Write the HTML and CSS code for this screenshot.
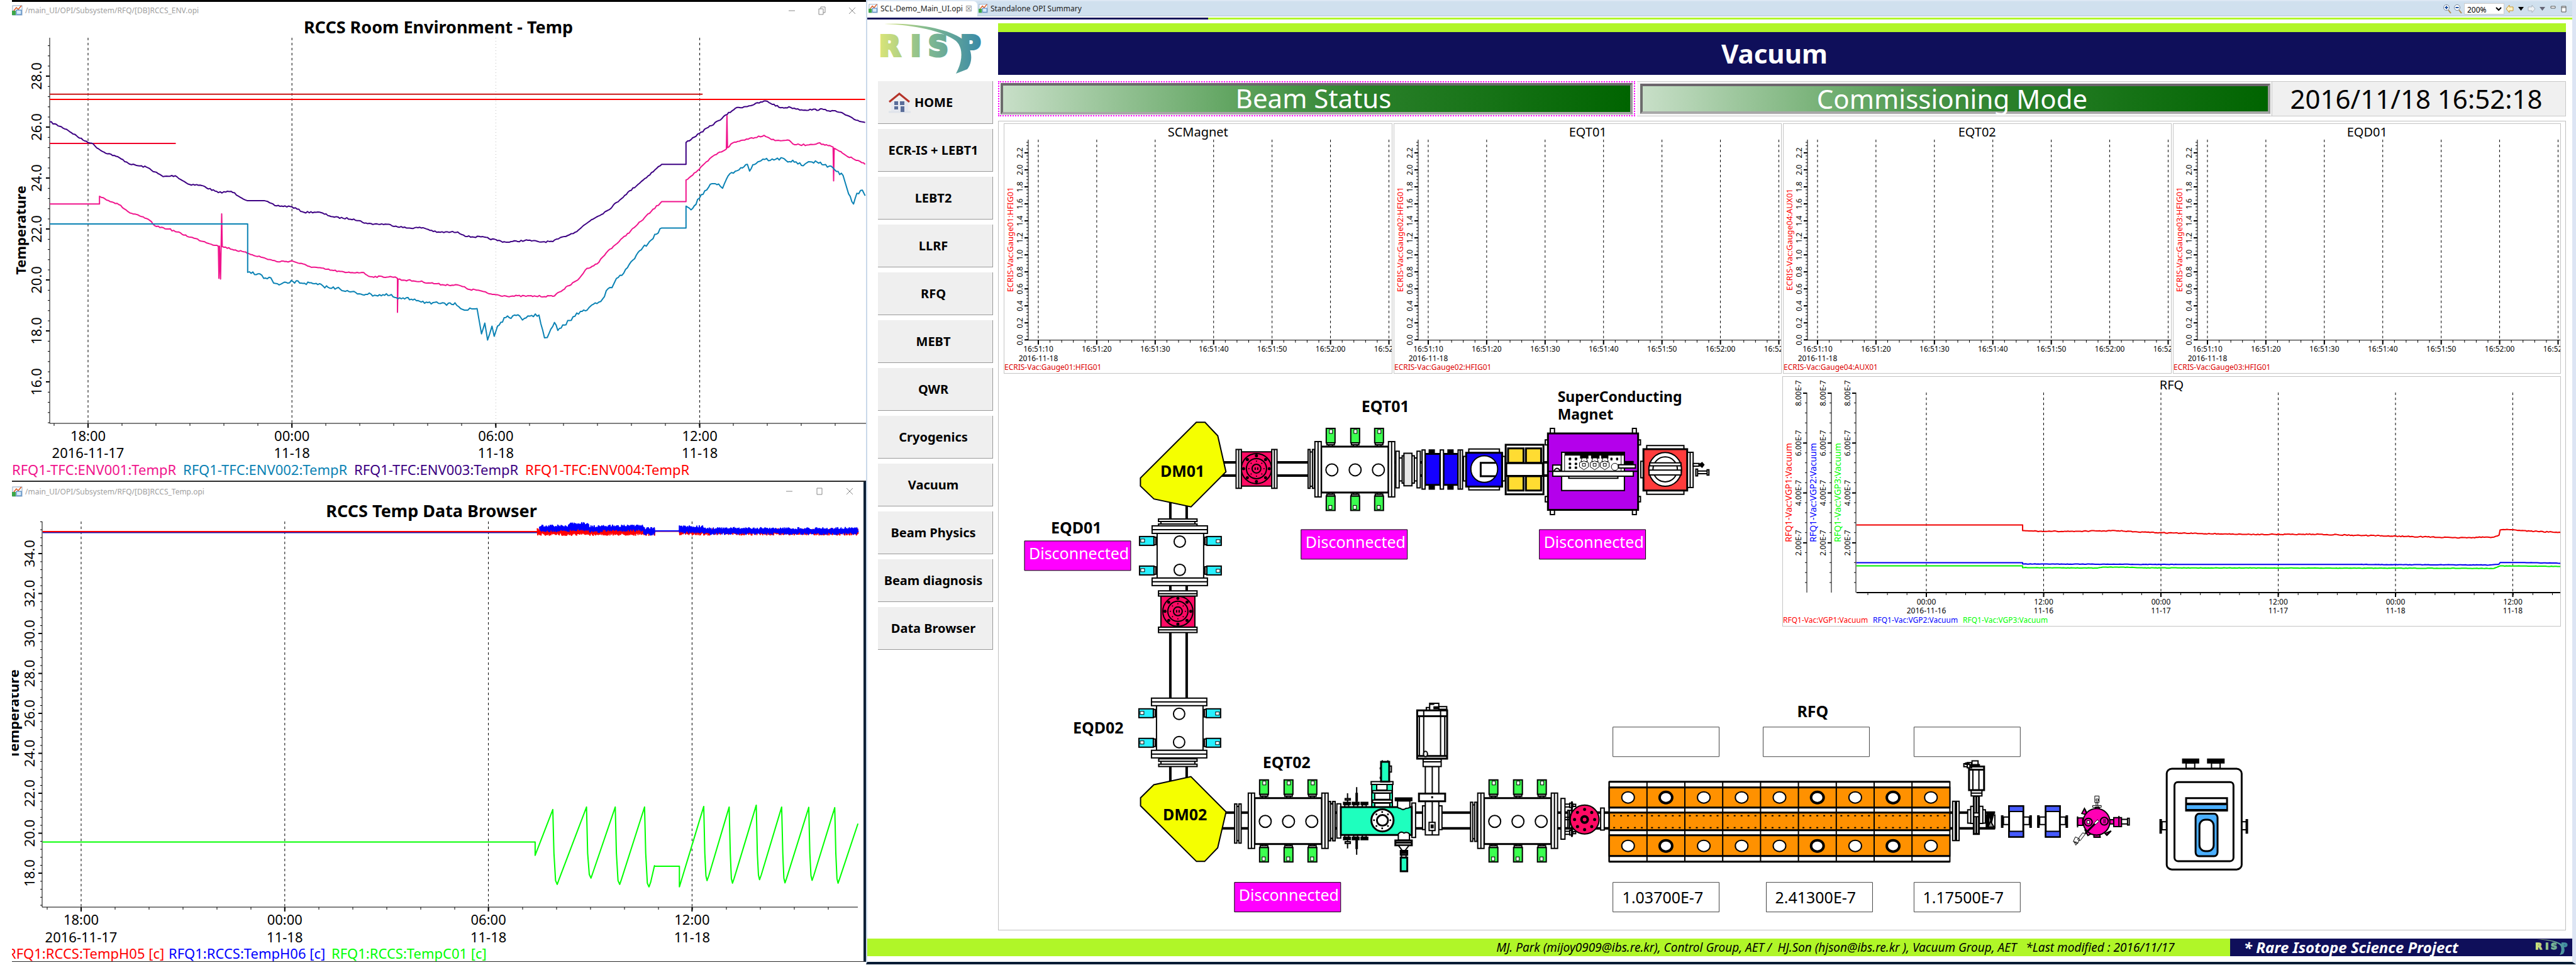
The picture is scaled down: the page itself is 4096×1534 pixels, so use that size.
FILE: index.html
```html
<!DOCTYPE html>
<html lang="en">
<head>
<meta charset="utf-8">
<title>SCL-Demo Main UI - Vacuum</title>
<link rel="stylesheet" href="styles.css">
</head>
<body>
<svg class="defs" width="0" height="0" aria-hidden="true">
  <defs>
    <linearGradient id="logo-fill" gradientUnits="userSpaceOnUse" x1="0" y1="0" x2="172" y2="0">
      <stop offset="0" stop-color="#dce678"/><stop offset=".45" stop-color="#84bb90"/><stop offset="1" stop-color="#3285a8"/>
    </linearGradient>
    <g id="opi">
      <rect x="1" y="1" width="15" height="15" fill="#fff" stroke="#8ba6c4" stroke-width="1"/>
      <path d="M3 9l4-5 3 3 5-6" fill="none" stroke="#d9541e" stroke-width="1.5"/>
      <rect x="0" y="9" width="6" height="7" fill="#3da648" stroke="none"/>
      <rect x="7" y="8" width="8" height="7" fill="#d8ebfb" stroke="#2d6fb3" stroke-width="1"/>
    </g>
    <g id="logo">
      <text class="logo-text" x="2" y="52">R</text>
      <text class="logo-text" x="52" y="52">I</text>
      <text class="logo-text" x="80" y="52">S</text>
      <text class="logo-text" x="131" y="52">P</text>
      <path stroke="none" d="M10 1C55 -1 112 8 134 25C152 40 151 62 142 73L124 80C134 62 137 40 124 28C102 12 60 3 10 1z" fill="url(#logo-fill)"/>
    </g>
    <!-- turbo pump port, tip at the top -->
    <g id="port">
      <rect class="tint" x="-7" y="0" width="14" height="23"/>
      <rect x="-2" y="2" width="5" height="6" stroke-width="1"/>
      <rect x="-6" y="23" width="12" height="3"/>
      <rect x="-3" y="26" width="6" height="3"/>
    </g>
    <g id="eqt">
      <use href="#port" x="26" y="-21"/><use href="#port" x="65" y="-21"/><use href="#port" x="103" y="-21"/>
      <use href="#port" transform="translate(26 109.500) rotate(180)"/><use href="#port" transform="translate(65 109.500) rotate(180)"/><use href="#port" transform="translate(103 109.500) rotate(180)"/>
      <rect x="11" y="8" width="107" height="73" stroke-width="3"/>
      <rect x="1" y="0" width="10" height="88"/><path d="M6 0V88"/>
      <rect x="118" y="0" width="10" height="88"/><path d="M123 0V88"/>
      <circle cx="28" cy="45" r="9.500"/><circle cx="65" cy="45" r="9.500"/><circle cx="102" cy="45" r="9.500"/>
    </g>
    <g id="eqd">
      <use href="#port" transform="translate(-20 24) rotate(-90)"/><use href="#port" transform="translate(-20 71) rotate(-90)"/>
      <use href="#port" transform="translate(110 24) rotate(90)"/><use href="#port" transform="translate(110 71) rotate(90)"/>
      <rect x="8" y="11" width="74" height="72"/>
      <rect x="0" y="0" width="88" height="12"/><path d="M0 6H88"/>
      <rect x="0" y="83" width="88" height="12"/><path d="M0 89H88"/>
      <circle cx="44" cy="25" r="9"/><circle cx="44" cy="70" r="9"/>
    </g>
    <g id="face">
      <circle class="tint" r="24"/><circle class="tint" r="16"/><circle class="tint" r="7"/>
      <circle class="dots" r="20.500" pathLength="8" stroke-dasharray="0 1" stroke-width="5"/>
      <circle class="dots" r="12" pathLength="8" stroke-dasharray="0 1" stroke-width="2"/>
      <path d="M-2 -2v4M2 -2v4"/>
    </g>
  </defs>
</svg>

<main class="desktop">
  <div class="recorders">
    <section class="recorder">
      <header class="titlebar">
        <svg class="icon" viewBox="0 0 17 17"><use href="#opi"/></svg>
        <span class="path">/main_UI/OPI/Subsystem/RFQ/[DB]RCCS_ENV.opi</span>
        <button class="winbtn" aria-label="Minimize"><svg viewBox="0 0 14 14"><path d="M2 7h10"/></svg></button>
        <button class="winbtn" aria-label="Restore"><svg viewBox="0 0 14 14"><path d="M2 4h7v9H2zM5 4V1h7v9H9"/></svg></button>
        <button class="winbtn" aria-label="Close"><svg viewBox="0 0 14 14"><path d="M2 2l10 10M12 2L2 12"/></svg></button>
      </header>
      <svg class="chart recorder-chart" id="chart-env" viewBox="19 30 1358 734"></svg>
    </section>
    <section class="recorder recorder-front">
      <header class="titlebar">
        <svg class="icon" viewBox="0 0 17 17"><use href="#opi"/></svg>
        <span class="path">/main_UI/OPI/Subsystem/RFQ/[DB]RCCS_Temp.opi</span>
        <button class="winbtn" aria-label="Minimize"><svg viewBox="0 0 14 14"><path d="M2 7h10"/></svg></button>
        <button class="winbtn" aria-label="Maximize"><svg viewBox="0 0 14 14"><path d="M3 2h8v10H3z"/></svg></button>
        <button class="winbtn" aria-label="Close"><svg viewBox="0 0 14 14"><path d="M2 2l10 10M12 2L2 12"/></svg></button>
      </header>
      <svg class="chart recorder-chart" id="chart-temp" viewBox="19 796 1354 732"></svg>
    </section>
  </div>

  <div class="workbench">
    <nav class="tabs">
      <a class="tab tab-active" href="#main"><svg class="icon" viewBox="0 0 17 17"><use href="#opi"/></svg>SCL-Demo_Main_UI.opi <span class="tab-close">☒</span></a>
      <a class="tab" href="#summary"><svg class="icon" viewBox="0 0 17 17"><use href="#opi"/></svg>Standalone OPI Summary</a>
      <div class="tools">
        <button class="tool" aria-label="Zoom in"><svg viewBox="0 0 14 16"><circle cx="6" cy="6" r="4.500" fill="#fff" stroke="#789"/><path d="M3.500 6h5M6 3.500v5" stroke="#1c4fa0" stroke-width="2"/><path d="M9 10l4 5" stroke="#b08a50" stroke-width="2"/></svg></button>
        <button class="tool" aria-label="Zoom out"><svg viewBox="0 0 14 16"><circle cx="6" cy="6" r="4.500" fill="#fff" stroke="#789"/><path d="M3.500 6h5" stroke="#1c4fa0" stroke-width="2"/><path d="M9 10l4 5" stroke="#b08a50" stroke-width="2"/></svg></button>
        <select class="zoom" aria-label="Zoom level"><option>200%</option></select>
        <button class="tool" aria-label="Back"><svg viewBox="0 0 14 16"><path d="M1 8l5-6v3h6v6H6v3z" fill="#fff3c4" stroke="#c9962a"/></svg></button>
        <button class="tool" aria-label="Back history"><svg viewBox="0 0 14 16"><path d="M3 5h9l-4.500 6z" fill="#000"/></svg></button>
        <button class="tool" aria-label="Forward"><svg viewBox="0 0 14 16"><path d="M13 8L8 2v3H2v6h6v3z" fill="#eef1f4" stroke="#a9b3bd"/></svg></button>
        <button class="tool" aria-label="Forward history"><svg viewBox="0 0 14 16"><path d="M3 5h9l-4.500 6z" fill="#667"/></svg></button>
        <button class="tool" aria-label="Minimize"><svg viewBox="0 0 14 16"><path d="M4 4h7v3H4z" fill="#fff" stroke="#555"/></svg></button>
        <button class="tool" aria-label="Maximize"><svg viewBox="0 0 14 16"><path d="M4 4h7v9H4zM4 6h7" fill="#fff" stroke="#555"/></svg></button>
      </div>
    </nav>
    <div class="rule"></div>

    <div class="page" id="main">
      <aside class="side">
        <svg class="logo" viewBox="0 0 172 82" role="img" aria-label="RISP"><use href="#logo"/></svg>
        <button class="nav nav-home"><svg class="home" viewBox="0 0 36 34"><path d="M5 15h27v17H5z" fill="#e6e9f0"/><path d="M1 32h35" stroke="#dfe3ea" stroke-width="3"/><path d="M2 16L18 3l16 13" fill="none" stroke="#b5342a" stroke-width="3"/><path d="M10 15h6v6h-6zM19 15h7v6h-7zM10 23h6v5h-6zM20 23h6v9h-6z" fill="#5a6d99"/></svg>HOME</button>
        <button class="nav">ECR-IS + LEBT1</button>
        <button class="nav">LEBT2</button>
        <button class="nav">LLRF</button>
        <button class="nav">RFQ</button>
        <button class="nav">MEBT</button>
        <button class="nav">QWR</button>
        <button class="nav">Cryogenics</button>
        <button class="nav">Vacuum</button>
        <button class="nav">Beam Physics</button>
        <button class="nav">Beam diagnosis</button>
        <button class="nav">Data Browser</button>
      </aside>

      <div class="content">
        <h1 class="banner">Vacuum</h1>
        <div class="status">
          <div class="lamp-box lamp-picked"><div class="lamp">Beam Status</div></div>
          <div class="lamp-box"><div class="lamp">Commissioning Mode</div></div>
          <time class="clock" datetime="2016-11-18T16:52:18">2016/11/18 16:52:18</time>
        </div>
        <section class="panel">
          <div class="gauges">
            <svg class="chart gauge" viewBox="0 0 618 398" data-title="SCMagnet" data-pv="ECRIS-Vac:Gauge01:HFIG01"></svg>
            <svg class="chart gauge" viewBox="0 0 618 398" data-title="EQT01" data-pv="ECRIS-Vac:Gauge02:HFIG01"></svg>
            <svg class="chart gauge" viewBox="0 0 618 398" data-title="EQT02" data-pv="ECRIS-Vac:Gauge04:AUX01"></svg>
            <svg class="chart gauge" viewBox="0 0 618 398" data-title="EQD01" data-pv="ECRIS-Vac:Gauge03:HFIG01"></svg>
          </div>
          <div class="synoptic">
            <svg class="beamline" viewBox="1596 598 2477 881">
              <!-- beam pipes -->
              <path class="pipe" d="M1861 780V1250M1887 780V1250M1930 735H2470M1930 756H2470M1930 1292H3173M1930 1317H3173"/>

              <!-- DM01, EQD01 column -->
              <g transform="translate(1611.500 600.800) scale(.3832 .3065)">
                <path fill="#f5ff00" d="M759 230H795L848 300L882 487L737 669L583 628L527 561V519z"/>
                <path d="M924 371h22v202h-22zM935 371v202M1072 371h22v202h-22zM1083 371v202"/>
                <path fill="#ff0a64" d="M946 383h126v178H946zM612 1132h141v161H612z"/>
                <path d="M602 1105h160v27H602zM602 1119h160M602 1293h160v28H602zM602 1307h160"/>
                <path d="M602 732h160v13H602zM612 745h141v13H612zM602 758h160v10H602z"/>
                <path d="M1223 371h8v202h-8zM1241 371h8v202h-8zM1231 384h10v178h-10z"/>
              </g>
              <use href="#face" class="c-rose" x="1998" y="745"/>
              <use href="#face" class="c-rose" x="1873" y="972"/>
              <use href="#eqd" class="c-cyan" x="1832" y="836"/>
              <use href="#eqd" class="c-cyan" x="1831" y="1110"/>
              <use href="#eqt" class="c-green" x="2090" y="702"/>

              <!-- EQT01 to the superconducting magnet -->
              <g transform="translate(2014.400 600.800) scale(.4733 .2356)">
                <path d="M434 494h11v248h-11zM505 494h11v248h-11zM445 540h10v155h-10zM455 525h10v185h-10zM488 525h8v185h-8zM496 540h9v155h-9z"/>
                <path fill="#e6e6e6" d="M461 508h27v220h-27z"/>
                <path fill="#000" d="M546 486h17v264h-17zM609 486h17v264h-17z"/>
                <path fill="#1400ff" stroke-width="3" d="M532 512h51v210h-51zM594 512h49v210h-49z"/>
                <path d="M522 486h10v264h-10zM583 486h11v264h-11zM643 486h15v264h-15zM650 486v264"/>
                <path d="M679 480h103v25H679zM679 733h103v23H679zM661 530h9v165h-9zM791 530h10v165h-10z"/>
                <path fill="#1400ff" stroke-width="3" d="M670 505h121v228H670z"/>
                <ellipse cx="731" cy="615" rx="45" ry="90"/>
                <path fill="none" stroke-width="3" d="M770 573H719V663H770"/>
                <path stroke-width="3" d="M803 451h127v334H803z"/>
                <path fill="#ffdc32" stroke-width="3" d="M811 475h52v98h-52zM871 475h51v98h-51zM811 663h52v97h-52zM871 663h51v97h-51z"/>
                <path stroke-width="3" d="M805 575h123v86H805z"/>
                <path d="M953 341h14v33h-14zM1229 341h13v33h-13zM953 890h14v32h-14zM1229 890h13v32h-13zM936 418h9v34h-9zM936 800h9v36h-9zM1248 418h8v34h-8zM1248 800h8v36h-8z"/>
                <path fill="#b400eb" stroke-width="3" d="M945 374h303v516H945z"/>
                <path d="M945 630h303"/>
                <path d="M991 502h211v258H991z"/>
                <path fill="#000" d="M1003 502h195v18h-195zM1055 520h24v20h-24zM1092 520h24v20h-24zM1126 520h20v20h-20z"/>
                <path stroke-width="1" d="M1001 522v106M1191 520v108M1060 540h14l4 24h-22zM1096 540h14l4 24h-22zM1130 540h14l4 24h-22z"/>
                <path stroke-width="1" d="M1066 560l15 12v28l-15 20-15-20v-28zM1102 560l15 12v28l-15 20-15-20v-28zM1136 560l15 12v28l-15 20-15-20v-28z"/>
                <path fill="none" stroke-width="1" d="M1061 576h10v20h-10zM1097 576h10v20h-10zM1131 576h10v20h-10z"/>
                <path fill="#000" stroke-width="1" d="M1016 540h6v14h-6zM1036 540h6v14h-6zM1016 574h6v12h-6zM1036 574h6v12h-6zM1016 600h6v12h-6zM1036 600h6v12h-6zM1156 540h5v14h-5zM1175 540h5v14h-5z"/>
                <ellipse cx="1170" cy="600" rx="12" ry="24" stroke-width="1"/>
                <path fill="#000" d="M1206 565h25v14h-25z"/>
                <path d="M1182 586h57v22h-57zM961 588h28v42h-28z"/>
                <path fill="none" d="M965 628q10-36 22 0M1015 663v14h165v-14"/>
                <path d="M961 630h271v33H961z"/>
                <path d="M1277 456h125v25h-125zM1277 760h125v25h-125zM1257 562h9v112h-9zM1413 502h20v238h-20zM1423 502v238"/>
                <path fill="#ff3c3c" stroke-width="3" d="M1266 481h147v279h-147z"/>
                <ellipse cx="1339" cy="617" rx="55" ry="114"/><ellipse cx="1339" cy="617" rx="41" ry="84"/>
                <path d="M1287 573h105v20h-105zM1285 622h108v33h-108z"/>
                <path d="M1433 577h20v18h-20zM1442 615h6v46h-6zM1448 628h32v18h-32zM1480 620h6v36h-6z"/>
                <path fill="#000" d="M1453 586l10-14 6 14-6 16z"/>
              </g>

              <!-- DM02 -->
              <g transform="translate(1682.200 1060.200) scale(.32455 .25243)">
                <path d="M494 580h188v15H494zM505 595h166v18H505zM494 613h188v15H494z"/>
                <path fill="#f5ff00" d="M652 692L824 914L783 1140L719 1226H679L405 876V825L470 743z"/>
                <path d="M866 864h11v247h-11zM887 864h11v247h-11zM877 880h10v215h-10z"/>
                <path d="M1325 849h11v246h-11zM1347 849h11v246h-11zM1336 862h11v220h-11z"/>
              </g>
              <use href="#eqt" class="c-green" x="1984" y="1261"/>
              <use href="#eqt" class="c-green" x="2349" y="1261"/>

              <!-- diagnostics chamber, gate valve, RFQ entrance -->
              <g transform="translate(2106.300 1095.600) scale(.31554 .2356)">
                <path d="M102 781h20v16h-20zM147 781h20v16h-20zM190 781h20v16h-20zM102 985h20v14h-20zM147 985h20v14h-20zM190 985h20v14h-20z"/>
                <path fill="#000" d="M96 765h34v14H96zM140 765h34v14h-34zM184 765h34v14h-34zM96 1000h34v16H96zM140 1000h34v16h-34zM184 1000h34v16h-34z"/>
                <path d="M116 703v60M162 662v100M116 1018v58M162 1018v100"/><path stroke-width="4" d="M162 700v60M162 1018v62"/>
                <path d="M104 739h26v10h-26zM104 1030h26v12h-26z"/>
                <path fill="#1effbe" d="M238 644h104v153H238z"/>
                <path d="M263 644h52v38h-52zM253 703h76v42h-76zM253 770h76v27h-76zM242 685h98v16h-98zM242 749h98v18h-98zM235 625h110v19H235zM326 520h11v40h-11z"/>
                <path fill="#1effbe" stroke-width="3" d="M285 491h41v134h-41z"/>
                <path fill="none" d="M291 480v11M319 480v11M281 528v14M281 592v14"/>
                <path d="M62 774h20v232H62zM440 769h19v232h-19zM20 758h10v266H20zM42 758h11v266H42zM30 775h12v232H30z"/>
                <path fill="#1effbe" stroke-width="3" d="M82 797h358v188H82z"/>
                <path d="M368 755h62v42q-6 8-20 8-14 16-28 0-10 0-14-8zM372 1020v-42q14-22 28-6 18-12 28 6v42z"/>
                <path fill="#000" d="M357 735h83v18h-83z"/>
                <path stroke-width="3" d="M357 1022h83v33h-83zM357 1037h83"/>
                <path d="M372 1055h54l-20 35h-14zM388 1118h23v19h-23z"/>
                <path stroke-width="3" d="M384 1092h33v26h-33zM384 1104h33"/>
                <path fill="#1effbe" stroke-width="3" d="M384 1137h33v93h-33z"/>
                <ellipse cx="292" cy="886" rx="56" ry="75" stroke-width="3"/><ellipse cx="292" cy="886" rx="28" ry="36" stroke-width="3"/>
                <path d="M494 788h14v160h-14zM576 788h16v160h-16z"/>
                <path d="M508 523h68v462h-68zM543 523v462"/>
                <path stroke-width="3" d="M476 705h132v52H476z"/>
                <path d="M527 900h30v55h-30z"/><path fill="#000" d="M538 918h9v18h-9z"/><path fill="#000" d="M541 727h3v6h-3z"/>
                <path d="M497 472h91v51h-91zM497 491h91"/>
                <path d="M513 125h17v18h-17zM530 96h46v47h-46zM576 118h40v25h-40z"/><path fill="#000" d="M532 96h18v6h-18zM552 120h24v12h-24zM580 136h36v6h-36z"/>
                <path stroke-width="3" d="M467 144h151v326H467zM467 183h151M467 452h151"/>
                <path fill="none" d="M478 183v269M500 144v308M585 144v308M606 183v269"/>
                <ellipse cx="509" cy="438" rx="10" ry="18"/>
                <path d="M736 764h11v264h-11zM757 764h11v264h-11zM747 782h10v228h-10z"/>
                <path d="M1192 738h20v275h-20zM1226 818h8v120h-8zM1236 818h10v120h-10zM1212 776h24v20h-24zM1212 866h36v16h-36zM1212 960h24v20h-24z"/>
                <path d="M1236 770h14v30h-14zM1252 778h14v14h-14zM1236 954h14v30h-14zM1252 962h14v14h-14z"/>
                <path stroke-width="3" d="M1247 758v240"/>
                <path d="M1392 803h18v149h-18z"/>
              </g>
              <circle class="dots" cx="2198" cy="1304" r="13" pathLength="8" stroke-dasharray="0 1" stroke-width="3"/>
              <g class="c-rose"><circle class="tint" cx="2520" cy="1303" r="23"/><circle class="dots" cx="2520" cy="1303" r="16" pathLength="8" stroke-dasharray="0 1" stroke-width="5"/><circle class="tint" cx="2520" cy="1303" r="5" stroke-width="4"/></g>

              <!-- RFQ cavity, cells are drawn by the script -->
              <g id="rfq-cavity"></g>

              <!-- MEBT section and ion source -->
              <g transform="translate(2516.200 1102.600) scale(.68517 .2356)">
                <path d="M860 728h6v265h-6zM869 728h6v265h-6z"/>
                <path d="M895 785h7v90h-7zM902 762h8v115h-8zM922 762h8v115h-8zM930 785h6v90h-6z"/>
                <path stroke-width="3" d="M909 692h12v256h-12zM915 692v256"/>
                <path d="M909 806h12v26h-12zM903 652h25v40h-25zM903 672h25"/>
                <path stroke-width="3" d="M898 493h35v159h-35zM898 514h35"/>
                <path d="M907 514v138M921 514v138M905 455h14v38h-14zM886 474h8v20h-8zM894 466h10v36h-10z"/><path fill="#000" d="M900 480h22v14h-22zM890 470h8v8h-8z"/>
                <path d="M938 820h20v88h-20z"/><path fill="#000" d="M944 803h12l-6 70zM940 812h4v90h-4z"/><path fill="#999" d="M948 862l8 40h-14z"/>
                <path d="M978 834h60v51h-60zM1062 834h60v51h-60z"/>
                <path stroke-width="3" d="M991 760h33v207h-33zM1076 760h33v207h-33z"/>
                <path fill="#465aff" d="M991 760h33v37h-33zM991 930h33v37h-33zM1076 760h33v37h-33zM1076 930h33v37h-33z"/>
                <path stroke-width="4" d="M975 822v85M1041 822v85M1059 822v85M1125 822v85"/>
                <path stroke-width="1" d="M1190 692h10v44h-10zM1193 712h5v14h-5zM1193 736h4v20h-4zM1185 756h20v12h-20z"/>
                <path fill="#ff00b4" d="M1192 768l-2 14 12 2-3-18zM1166 776l-6 34 14 10zM1162 840h-12v50h12zM1168 925l6 34 10-16zM1188 950v20h14v-20zM1214 945l4 12 9-28zM1222 852h24v28h-24z"/>
                <ellipse cx="1194" cy="866" rx="31" ry="90" fill="#ff00b4"/>
                <path fill="none" d="M1167 780l4 32M1150 830v74M1188 970h16M1218 957l10-30"/>
                <ellipse cx="1175" cy="868" rx="9" ry="26" fill="#ff00b4"/><ellipse cx="1212" cy="862" rx="9" ry="26" fill="#ff00b4"/>
                <path stroke-width="1" d="M1172 858h6v20h-6zM1211 848v28M1214 848v28M1196 852l4 10-8 22-4-8z"/>
                <path fill="#ff00b4" d="M1234 838h18v60h-18z"/>
                <path d="M1246 826v76M1252 850h14v30h-14zM1266 842h4v46h-4z"/>
                <path fill="none" stroke-width="3" d="M1190 880L1168 945"/>
                <path stroke-width="1" d="M1162 940l6 8-12 46-6-8zM1145 968l10 14-5 32-10-14zM1142 1000l8 6-4 18z"/>

                <path d="M1402 470h20v36h-20zM1461 470h20v36h-20z"/><path fill="#000" d="M1394 443h37v26h-37zM1452 443h38v26h-38z"/>
                <path d="M1346 866h12v54h-12zM1530 866h12v54h-12z"/><path stroke-width="4" d="M1343 848v98M1543 848v98"/>
                <rect x="1357" y="508" width="174" height="680" rx="12" ry="32" stroke-width="3"/>
                <rect x="1375" y="598" width="137" height="534" rx="8" ry="24" stroke-width="3"/>
                <path stroke-width="3" d="M1402 706h95v84h-95zM1402 744h95"/><path fill="#4bafff" d="M1402 750h95v34h-95z"/>
                <rect x="1424" y="812" width="51" height="286" rx="8" ry="26" fill="#4bafff" stroke-width="3"/>
                <rect x="1433" y="852" width="33" height="212" rx="14" ry="40" stroke-width="3"/>
              </g>

              <!-- captions and readings -->
              <g class="caption">
                <text x="1845" y="758">DM01</text><text x="1849" y="1304">DM02</text>
                <text x="1671" y="848">EQD01</text><text x="1706" y="1166">EQD02</text>
                <text x="2165" y="655">EQT01</text><text x="2008" y="1221">EQT02</text>
                <text x="2858" y="1140">RFQ</text>
              </g>
              <g class="caption caption-small"><text x="2477" y="639">SuperConducting</text><text x="2477" y="667">Magnet</text></g>
              <g class="reading reading-lost">
                <rect x="1629" y="860" width="169" height="47"/><text x="1636" y="889">Disconnected</text>
                <rect x="2069" y="842" width="169" height="47"/><text x="2076" y="871">Disconnected</text>
                <rect x="2448" y="842" width="169" height="47"/><text x="2455" y="871">Disconnected</text>
                <rect x="1963" y="1403" width="169" height="47"/><text x="1970" y="1432">Disconnected</text>
              </g>
              <g class="reading">
                <rect x="2565" y="1156" width="169" height="47"/><rect x="2804" y="1156" width="169" height="47"/><rect x="3044" y="1156" width="169" height="47"/>
                <rect x="2565" y="1403" width="169" height="47"/><text x="2580" y="1436">1.03700E-7</text>
                <rect x="2809" y="1403" width="169" height="47"/><text x="2823" y="1436">2.41300E-7</text>
                <rect x="3044" y="1403" width="169" height="47"/><text x="3058" y="1436">1.17500E-7</text>
              </g>
            </svg>
            <svg class="chart chart-rfq" id="chart-rfq" viewBox="0 0 1238 398"></svg>
          </div>
        </section>
      </div>
    </div>

    <footer class="foot">
      <p class="credits">MJ. Park (mijoy0909@ibs.re.kr), Control Group, AET /&nbsp; HJ.Son (hjson@ibs.re.kr ), Vacuum Group, AET &nbsp; *Last modified : 2016/11/17</p>
      <p class="project">* Rare Isotope Science Project<svg class="foot-logo" viewBox="0 0 172 82" role="img" aria-label="RISP"><use href="#logo"/></svg></p>
    </footer>
  </div>
</main>
<script src="charts.js"></script>
</body>
</html>
```
FILE: styles.css
```css
* { box-sizing: border-box; }
body { margin: 0; background: #fff; color: #000; font-family: "Noto Sans", "Open Sans", sans-serif; }
button { font: inherit; padding: 0; border: 0; background: none; }
svg { display: block; }
p, h1 { margin: 0; }
.defs { position: absolute; }

.desktop { display: grid; grid-template-columns: 1358fr 2719fr; padding-left: 19px; }

/* recorder windows */
.recorder { background: #fff; border-top: 3px solid #000; overflow: hidden; }
.recorder-front { border-top: 2px solid #2b2b2b; border-right: 4px solid #0d2036; border-bottom: 1px solid #2b2b2b; }
.titlebar { display: flex; align-items: center; height: 27px; gap: 4px; color: #a0a0a0; font-size: 12px; }
.recorder-front .titlebar { height: 30px; }
.titlebar .path { flex: 1; }
.icon { width: 17px; height: 17px; }
.winbtn { width: 44px; }
.winbtn svg { width: 14px; height: 14px; margin: 0 auto; fill: none; stroke: #888; }
.chart { width: 100%; height: auto; overflow: hidden; }
.recorder-chart { overflow: visible; }
.chart text { fill: #000; }
.chart .axis { stroke: #000; fill: none; }
.chart .grid { stroke: #000; stroke-dasharray: 4 4; }
.chart .grid-faint { stroke: #bbb; stroke-dasharray: 1 4; }
.chart .trace { fill: none; stroke-linejoin: round; }

/* workbench window */
.workbench { display: flex; flex-direction: column; background: #fff; border-left: 2px solid #c9d8ea; border-right: 6px solid #dde5f4; border-bottom: 4px solid #001a33; }
.tabs { display: flex; align-items: center; height: 26px; background: #d0e0ee; border-top: 2px solid #dde8f4; border-bottom: 1px solid #b4c4d4; font-size: 12px; }
.tab { display: flex; align-items: center; gap: 4px; height: 24px; padding: 0 8px 0 2px; color: #222; text-decoration: none; }
.tab .icon { width: 15px; height: 15px; }
.tab-active { background: #fff; border-radius: 0 6px 0 0; }
.tab-close { color: #777; }
.tools { display: flex; align-items: center; margin-left: auto; gap: 2px; padding-right: 6px; }
.tool { width: 15px; height: 16px; }
.tool svg { width: 14px; height: 16px; fill: none; }
.zoom { width: 64px; height: 18px; font: 12px "Noto Sans", sans-serif; line-height: 16px; border: 1px solid #ccc; background: #fff; padding: 0; }
.rule { height: 3px; margin-top: 2px; background: linear-gradient(90deg, #0f0f5a 20%, #b0f628 20%); }

.page { display: grid; grid-template-columns: 208px 1fr; padding: 6px 10px 13px 0; }
.side { display: flex; flex-direction: column; gap: 8px; padding: 0 8px 0 17px; }
.logo { width: 172px; height: 82px; margin-bottom: 2px; }
.logo-text { font: 700 44px "DejaVu Sans", sans-serif; fill: url(#logo-fill); stroke: url(#logo-fill); stroke-width: 4px; }
.nav { display: flex; align-items: center; justify-content: center; gap: 6px; height: 68px; padding-right: 6px; background: #efefef; border-right: 1px solid #999; border-bottom: 1px solid #999; font-size: 20px; font-weight: 700; white-space: nowrap; }
.nav-home { justify-content: flex-start; padding-left: 16px; }
.home { width: 36px; height: 48px; }

.banner { height: 82px; padding-right: 24px; border-top: 14px solid #b0f628; background: #0f0f5a; color: #fff; font-size: 42px; line-height: 68px; text-align: center; }
.status { display: grid; grid-template-columns: 1016fr 1009fr 468fr; height: 56px; margin-top: 10px; }
.lamp-box { padding: 3px 2px 3px 5px; background: #f6f6f6; border-top: 1px solid #ccc; border-bottom: 1px solid #ccc; }
.lamp-picked { margin-right: 3px; padding: 1px 2px; border: 2px dotted #f0f; }
.lamp { height: 100%; padding-right: 10px; border: 4px solid; border-color: #6c666c #999 #a8a8a8 #6c6c6c; background: linear-gradient(90deg, #c8dfc8, #65a765 35%, #2a802a 58%, #006400); color: #fff; font-size: 42px; line-height: 40px; text-align: center; }
.clock { padding-right: 8px; background: #f0f0f0; border: 1px solid #c8c8c8; font-size: 42px; line-height: 54px; text-align: center; }

.panel { margin-top: 7px; padding: 3px 7px 0 8px; border: 1px solid #c0c0c0; }
.gauges { display: grid; grid-template-columns: repeat(4, 1fr); gap: 2px; }
.gauge, .chart-rfq { outline: 1px solid #c4c4c4; outline-offset: -1px; background: #fff; }
.synoptic { display: grid; margin-top: 4px; }
.beamline, .chart-rfq { grid-area: 1 / 1; }
.beamline { width: 100%; height: auto; }
.chart-rfq { width: 50%; justify-self: end; align-self: start; }

/* beamline drawing */
.beamline { fill: #fff; stroke: #000; stroke-width: 2; }
.beamline path, .beamline ellipse, .beamline rect { vector-effect: non-scaling-stroke; }
.beamline .pipe { stroke-width: 4; }
.tint { fill: currentColor; }
.dots { fill: none; stroke-linecap: round; }
.c-rose { color: #ff0a64; }
.c-cyan { color: #28f0ff; }
.c-green { color: #3cff50; }
.caption { font-size: 25px; font-weight: 700; fill: #000; stroke: none; }
.caption-small { font-size: 23px; }
.reading { font-size: 25px; stroke: none; fill: #000; }
.reading rect { fill: #fff; stroke: #444; stroke-width: 1; }
.reading-lost { fill: #fff; }
.reading-lost rect { fill: #f0f; stroke: #000; }

.foot { display: grid; grid-template-columns: 2166fr 544fr; height: 28px; margin-bottom: 9px; font-style: italic; line-height: 28px; white-space: nowrap; }
.credits { background: #b0f628; text-align: right; padding-right: 88px; font-size: 19px; }
.project { display: flex; justify-content: space-between; align-items: center; padding: 0 4px 0 22px; background: #0f0f5a; color: #fff; font-size: 24px; font-weight: 700; }
.foot-logo { width: 56px; height: 26px; }
```
FILE: charts.js
```js
const NS = 'http://www.w3.org/2000/svg';

function add(parent, name, attrs, text) {
  const el = document.createElementNS(NS, name);
  for (const key in attrs) el.setAttribute(key, attrs[key]);
  if (text !== undefined) el.textContent = text;
  parent.appendChild(el);
  return el;
}

// text centred on (x, y); turn = -90 for vertical labels
function label(svg, x, y, size, text, opt = {}) {
  const el = add(svg, 'text', {
    'text-anchor': opt.anchor || 'middle', 'font-size': size,
    'font-weight': opt.bold ? 700 : 400,
    transform: `translate(${x} ${y}) rotate(${opt.turn || 0})`,
    y: Math.round(size * 0.36)
  }, text);
  if (opt.color) el.style.fill = opt.color;
}

let seed = 7;
function random() {
  seed = (seed * 16807) % 2147483647;
  return seed / 2147483647 - 0.5;
}

// polyline through the samples with sensor jitter on the sloping parts
function trace(svg, pts, map, color, width, jitter) {
  const out = [];
  pts.forEach((p, i) => {
    out.push(map(p[0], p[1]));
    const q = pts[i + 1];
    if (!q || !jitter || q[1] === p[1] || q[0] - p[0] < 6) return;
    const n = Math.floor((q[0] - p[0]) / 3);
    for (let k = 1; k < n; k++) {
      out.push(map(p[0] + (q[0] - p[0]) * k / n, p[1] + (q[1] - p[1]) * k / n + random() * jitter));
    }
  });
  add(svg, 'polyline', {
    class: 'trace', stroke: color, 'stroke-width': width,
    points: out.map(p => p[0].toFixed(1) + ',' + p[1].toFixed(1)).join(' ')
  });
}

function xAxis(svg, c) {
  add(svg, 'path', { class: 'axis', d: `M${c.left} ${c.bottom}H${c.right}`, 'stroke-width': c.thin || 1 });
  for (let x = c.minorStart; x < c.right; x += c.minor) {
    add(svg, 'path', { class: 'axis', d: `M${x} ${c.bottom}v4` });
  }
  c.labels.forEach((rows, i) => {
    const x = c.first + i * c.step;
    add(svg, 'path', { class: i === c.faint ? 'grid-faint' : 'grid', d: `M${x} ${c.top}V${c.bottom}` });
    add(svg, 'path', { class: 'axis', 'stroke-width': 2, d: `M${x} ${c.bottom}v7` });
    rows.forEach((t, k) => label(svg, x, c.rows[k], c.size, t));
  });
}

function yAxis(svg, c) {
  add(svg, 'path', { class: 'axis', d: `M${c.x} ${c.top}V${c.bottom}` });
  for (let y = c.minorStart; y > c.top; y -= c.minor) {
    add(svg, 'path', { class: 'axis', d: `M${c.x} ${y}h-3` });
  }
  c.labels.forEach((t, i) => {
    const y = c.first + i * c.step;
    add(svg, 'path', { class: 'axis', 'stroke-width': 2, d: `M${c.x} ${y}h-6` });
    label(svg, c.labelX, y, c.size, t, { turn: -90 });
  });
}

const hours = [['18:00', '2016-11-17'], ['00:00', '11-18'], ['06:00', '11-18'], ['12:00', '11-18']];

// room environment
(function () {
  const svg = document.getElementById('chart-env');
  const map = (x, y) => [x * 0.879, y * 0.4891];
  xAxis(svg, { left: 79, right: 1377, top: 60, bottom: 673, first: 140, step: 324.2, labels: hours, faint: 2, minorStart: 86, minor: 54, rows: [693, 720], size: 22 });
  yAxis(svg, { x: 79, top: 60, bottom: 673, first: 121, step: 81, labels: ['28.0', '26.0', '24.0', '22.0', '20.0', '18.0', '16.0'], minorStart: 672, minor: 16.2, labelX: 58, size: 22 });
  label(svg, 697, 43, 27, 'RCCS Room Environment - Temp', { bold: 1 });
  label(svg, 33, 366, 22, 'Temperature', { bold: 1, turn: -90 });
  trace(svg, [[90, 306], [1271, 306]], map, '#c81414', 2);
  trace(svg, [[90, 323], [1565, 323]], map, '#ff0000', 2);
  trace(svg, [[90, 466], [318, 466]], map, '#f00028', 2);
  trace(svg, [[90, 396], [120, 420], [150, 455], [165, 465], [185, 492], [210, 508], [238, 535], [265, 543], [295, 574], [317, 571], [340, 598], [365, 603], [395, 626], [418, 622], [447, 652], [478, 652], [497, 668], [528, 672], [550, 690], [575, 689], [605, 706], [640, 712], [665, 727], [700, 729], [735, 741], [765, 740], [790, 755], [828, 754], [845, 769], [870, 770], [915, 787], [955, 781], [975, 786], [1000, 785], [1020, 769], [1040, 755], [1070, 714], [1100, 683], [1130, 635], [1160, 590], [1197, 534], [1241, 534], [1241, 463], [1265, 434], [1300, 392], [1330, 352], [1355, 344], [1385, 328], [1412, 350], [1430, 349], [1450, 357], [1490, 356], [1520, 365], [1545, 388], [1565, 398]], map, '#3c0082', 2, 5);
  trace(svg, [[90, 663], [180, 663], [180, 638], [215, 665], [235, 692], [265, 710], [283, 736], [305, 744], [345, 771], [395, 800], [396, 905], [397, 800], [399, 907], [401, 695], [402, 801], [450, 824], [500, 850], [530, 849], [560, 866], [625, 886], [655, 885], [670, 899], [715, 900], [719, 905], [719, 1015], [720, 908], [760, 915], [800, 925], [830, 927], [850, 941], [865, 943], [885, 955], [915, 962], [1000, 963], [1045, 910], [1062, 872], [1080, 858], [1100, 815], [1120, 785], [1150, 735], [1197, 655], [1241, 655], [1241, 585], [1265, 550], [1290, 507], [1314, 484], [1315, 376], [1316, 480], [1325, 465], [1350, 452], [1382, 440], [1402, 457], [1425, 455], [1437, 470], [1460, 471], [1480, 465], [1507, 478], [1508, 588], [1509, 482], [1530, 505], [1565, 534]], map, '#f0148c', 2, 5);
  trace(svg, [[90, 728], [448, 728], [448, 885], [470, 890], [477, 905], [490, 903], [495, 920], [505, 926], [530, 915], [575, 925], [600, 937], [612, 934], [625, 947], [665, 957], [705, 960], [720, 971], [750, 972], [780, 988], [800, 984], [808, 992], [823, 984], [840, 1008], [863, 1003], [871, 1085], [877, 1050], [882, 1105], [890, 1060], [894, 1093], [900, 1060], [915, 1032], [940, 1027], [945, 1040], [955, 1027], [975, 1024], [985, 1098], [990, 1097], [1003, 1048], [1009, 1074], [1030, 1042], [1050, 1012], [1062, 1008], [1070, 992], [1090, 972], [1100, 938], [1107, 935], [1115, 905], [1125, 895], [1135, 870], [1142, 850], [1160, 812], [1175, 785], [1197, 741], [1241, 741], [1241, 670], [1250, 682], [1265, 645], [1275, 620], [1288, 597], [1300, 598], [1307, 612], [1320, 565], [1340, 545], [1352, 534], [1356, 556], [1362, 535], [1380, 517], [1400, 520], [1416, 514], [1422, 522], [1440, 526], [1450, 538], [1475, 523], [1487, 535], [1500, 540], [1510, 552], [1525, 570], [1530, 600], [1535, 630], [1544, 663], [1550, 628], [1560, 618], [1565, 636]], map, '#0a82b4', 2, 10);
  ['#f0148c', '#0a82b4', '#3c0082', '#ff0000'].forEach((color, i) =>
    label(svg, 19 + i * 272, 747, 22, `RFQ1-TFC:ENV00${i + 1}:TempR`, { anchor: 'start', color }));
})();

// cooling water temperature
(function () {
  const svg = document.getElementById('chart-temp');
  const map = (x, y) => [x * 0.879, 756.3 + y * 0.49585];
  xAxis(svg, { left: 67, right: 1364, top: 829, bottom: 1442, first: 129, step: 323.8, labels: hours, minorStart: 75, minor: 54, rows: [1462, 1490], size: 22 });
  yAxis(svg, { x: 67, top: 829, bottom: 1442, first: 880, step: 63.5, labels: ['34.0', '32.0', '30.0', '28.0', '26.0', '24.0', '22.0', '20.0', '18.0'], minorStart: 1439, minor: 12.7, labelX: 47, size: 22 });
  label(svg, 686, 812, 27, 'RCCS Temp Data Browser', { bold: 1 });
  label(svg, 22, 1135, 22, 'Temperature', { bold: 1, turn: -90 });

  const block = (list, from, to, hi, lo) => {
    for (let x = from; x < to; x += 1.5) {
      list.push([x, hi + random() * 8], [x + 0.7, lo + random() * 8]);
    }
  };
  const red = [], blue = [];
  block(red, 972, 1184, 172, 187);
  red.push([1184, 178], [1229, 178]);
  block(red, 1229, 1552, 174, 186);
  block(blue, 976, 1030, 162, 176);
  block(blue, 1030, 1066, 154, 172);
  block(blue, 1066, 1090, 164, 178);
  block(blue, 1090, 1164, 162, 174);
  block(blue, 1164, 1184, 170, 186);
  blue.push([1184, 177], [1229, 177]);
  block(blue, 1229, 1274, 164, 180);
  block(blue, 1274, 1552, 170, 184);
  trace(svg, [[77, 182], [972, 182]], map, '#1414b4', 2);
  trace(svg, [[77, 179], [972, 179]], map, '#ff0000', 2);
  trace(svg, red, map, '#ff0000', 2);
  trace(svg, blue, map, '#0000ff', 2);

  const green = [[77, 1174], [968, 1174], [968, 1217], [1000, 1070]];
  [[1000, 1070, 1310], [1061, 1062, 1290], [1113, 1062, 1310], [1166, 1062, 1318]].forEach(p =>
    green.push([p[0], p[1]], [p[0] + 2, 1210], [p[0] + 5, p[2] - 12], [p[0] + 8, p[2]], [p[0] + 11, p[2] - 15]));
  green.push([1184, 1250], [1184, 1252], [1229, 1252], [1229, 1318]);
  [[1273, 1060, 1298], [1319, 1062, 1306], [1368, 1056, 1295], [1414, 1062, 1305], [1463, 1063, 1297], [1510, 1064, 1306]].forEach(p =>
    green.push([p[0], p[1]], [p[0] + 2, 1210], [p[0] + 4, p[2] - 15], [p[0] + 6, p[2]], [p[0] + 9, p[2] - 15]));
  green.push([1552, 1115]);
  trace(svg, green, map, '#00ff00', 2);

  label(svg, 12, 1516, 22, 'RFQ1:RCCS:TempH05 [c]', { anchor: 'start', color: '#ff0000' });
  label(svg, 268, 1516, 22, 'RFQ1:RCCS:TempH06 [c]', { anchor: 'start', color: '#0000ff' });
  label(svg, 527, 1516, 22, 'RFQ1:RCCS:TempC01 [c]', { anchor: 'start', color: '#00ff00' });
})();

// gauge strip charts
document.querySelectorAll('.gauge').forEach(svg => {
  const pv = svg.dataset.pv;
  const times = ['16:51:10', '16:51:20', '16:51:30', '16:51:40', '16:51:50', '16:52:00', '16:52:10'].map(t => [t]);
  times[0].push('2016-11-18');
  xAxis(svg, { left: 39, right: 618, top: 26, bottom: 345, first: 55, step: 93, labels: times, minorStart: 55, minor: 18.6, rows: [359, 374], size: 12 });
  yAxis(svg, { x: 39, top: 26, bottom: 345, first: 47, step: 27.05, labels: ['2.2', '2.0', '1.8', '1.6', '1.4', '1.2', '1.0', '0.8', '0.6', '0.4', '0.2', '0.0'], minorStart: 344, minor: 5.41, labelX: 26, size: 12 });
  label(svg, 309, 14, 20, svg.dataset.title);
  label(svg, 10, 185, 13, pv, { turn: -90, color: '#ff0000' });
  label(svg, 1, 388, 12, pv, { anchor: 'start', color: '#dc0000' });
});

// RFQ vacuum history
(function () {
  const svg = document.getElementById('chart-rfq');
  const map = (x, y) => [(x - 27) * 0.81816, (y - 41) * 0.27948];
  const days = [['00:00', '2016-11-16'], ['12:00', '11-16'], ['00:00', '11-17'], ['12:00', '11-17'], ['00:00', '11-18'], ['12:00', '11-18']];
  xAxis(svg, { left: 118, right: 1238, top: 26, bottom: 344, first: 229, step: 186.5, labels: days, minorStart: 136, minor: 31.1, rows: [359, 373], size: 12, thin: 2 });
  ['#ff0000', '#0000ff', '#00ff00'].forEach((color, i) => {
    const x = 39 + i * 39;
    const pv = `RFQ1-Vac:VGP${i + 1}:Vacuum`;
    yAxis(svg, { x, top: 26, bottom: 344, first: 27, step: 79.3, labels: ['8.00E-7', '6.00E-7', '4.00E-7', '2.00E-7'], minorStart: 328, minor: 15.86, labelX: x - 13, size: 12 });
    label(svg, x - 29, 185, 14, pv, { turn: -90, color });
    label(svg, 1 + i * 143, 388, 12, pv, { anchor: 'start', color });
  });
  label(svg, 619, 14, 20, 'RFQ');
  trace(svg, [[171, 887], [494, 887], [494, 919], [515, 922], [540, 924], [600, 923], [650, 921], [680, 920], [720, 928], [800, 934], [880, 938], [930, 941], [1070, 940], [1140, 946], [1220, 951], [1280, 955], [1330, 960], [1360, 959], [1410, 956], [1420, 945], [1422, 916], [1435, 912], [1480, 922], [1540, 930]], map, '#f00000', 2, 5);
  trace(svg, [[171, 1102], [494, 1102], [494, 1109], [800, 1112], [1150, 1112], [1400, 1115], [1420, 1110], [1422, 1101], [1470, 1101], [1540, 1105]], map, '#0000f0', 2, 2);
  trace(svg, [[171, 1120], [494, 1120], [494, 1130], [640, 1132], [650, 1127], [700, 1128], [720, 1131], [1410, 1134], [1422, 1120], [1540, 1123]], map, '#00f000', 2, 2);
})();

// RFQ cavity: nine cells
(function () {
  const g = document.getElementById('rfq-cavity');
  const left = 2559, right = 3101, cell = 542 / 9;
  add(g, 'path', { d: `M${left} 1243H${right}V1370H${left}z` });
  [[1252, 32], [1292, 28], [1328, 33]].forEach(([y, h]) =>
    add(g, 'path', { fill: '#ff9100', d: `M${left} ${y}h542v${h}h-542z` }));
  for (let i = 0; i < 9; i++) {
    const x = left + i * cell, heavy = [1, 5, 7].includes(i) ? 4 : 2;
    add(g, 'path', { d: `M${x} 1243V1370` });
    for (const y of [1268, 1345]) add(g, 'ellipse', { cx: x + cell / 2, cy: y, rx: 10, ry: 9, 'stroke-width': heavy });
    for (const y of [1297, 1316]) {
      for (let k = 0; k < 5; k++) add(g, 'path', { d: `M${x + 8 + k * 11} ${y - 1}v2`, 'stroke-width': 3 });
    }
  }
  add(g, 'path', { 'stroke-width': 3, d: `M${left} 1243h542M${left} 1252h542M${left} 1284h542M${left} 1292h542M${left} 1320h542M${left} 1328h542M${left} 1361h542M${left} 1370h542` });
})();
```
